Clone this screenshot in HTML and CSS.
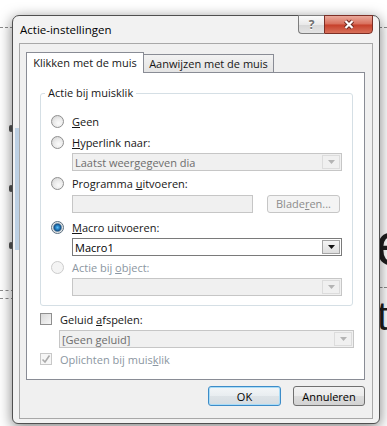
FILE: index.html
```html
<!DOCTYPE html>
<html lang="nl">
<head>
    <meta charset="UTF-8">
    <meta name="viewport" content="width=device-width, initial-scale=1.0">
    <title>Actie-instellingen</title>
    <link rel="stylesheet" href="styles.css">
</head>
<body>

<!-- slide behind the dialog -->
<div class="slide">
    <div class="dash dash-top"></div>
    <div class="dash dash-left-a"></div>
    <div class="dash dash-left-b"></div>
    <div class="dash dash-right"></div>
    <div class="handle handle-1"></div>
    <div class="handle handle-2"></div>
    <div class="handle handle-3"></div>
    <span class="glyph glyph-k">k</span>
    <span class="glyph glyph-e">e</span>
    <span class="glyph glyph-t">t</span>
</div>

<div class="dialog">
    <div class="titlebar">
        <span class="title">Actie-instellingen</span>
        <div class="caption-buttons">
            <div class="cap-btn cap-help">?</div>
            <div class="cap-btn cap-close">
                <svg width="14" height="11" viewBox="0 0 14 11">
                    <path d="M3.5 2 L10.5 9 M10.5 2 L3.5 9" stroke="#6b2a22" stroke-width="4.2" fill="none"/>
                    <path d="M3.5 2 L10.5 9 M10.5 2 L3.5 9" stroke="#ffffff" stroke-width="2.2" fill="none"/>
                </svg>
            </div>
        </div>
    </div>

    <div class="client">
        <div class="tabs">
            <div class="tab tab-active">Klikken met de muis</div>
            <div class="tab tab-inactive">Aanwijzen met de muis</div>
        </div>

        <div class="panel">
            <fieldset class="group">
                <legend>Actie bij muisklik</legend>

                <div class="opt">
                    <span class="radio"></span>
                    <span><u>G</u>een</span>
                </div>
                <div class="opt gap-5">
                    <span class="radio"></span>
                    <span><u>H</u>yperlink naar:</span>
                </div>
                <div class="combo indent gap-3">
                    <span>Laatst weergegeven dia</span>
                    <span class="combo-arrow">
                        <svg width="7" height="4" viewBox="0 0 7 4"><path d="M0 0 H7 L3.5 4 Z" fill="#b4b4b4"/></svg>
                    </span>
                </div>
                <div class="opt gap-4">
                    <span class="radio"></span>
                    <span>Programma <u>u</u>itvoeren:</span>
                </div>
                <div class="field-row indent gap-4">
                    <div class="field"></div>
                    <div class="btn-browse">Blade<u>r</u>en...</div>
                </div>
                <div class="opt gap-6">
                    <span class="radio radio-on"></span>
                    <span><u>M</u>acro uitvoeren:</span>
                </div>
                <div class="combo combo-enabled indent gap-3">
                    <span>Macro1</span>
                    <span class="combo-arrow">
                        <svg width="7" height="4" viewBox="0 0 7 4"><path d="M0 0 H7 L3.5 4 Z" fill="#111111"/></svg>
                    </span>
                </div>
                <div class="opt opt-disabled gap-3">
                    <span class="radio radio-disabled"></span>
                    <span>Actie bij <u>o</u>bject:</span>
                </div>
                <div class="combo indent gap-3">
                    <span></span>
                    <span class="combo-arrow">
                        <svg width="7" height="4" viewBox="0 0 7 4"><path d="M0 0 H7 L3.5 4 Z" fill="#b4b4b4"/></svg>
                    </span>
                </div>
            </fieldset>

            <div class="opt gap-5">
                <span class="check"></span>
                <span>Geluid <u>a</u>fspelen:</span>
            </div>
            <div class="combo combo-sound gap-3">
                <span>[Geen geluid]</span>
                <span class="combo-arrow">
                    <svg width="7" height="4" viewBox="0 0 7 4"><path d="M0 0 H7 L3.5 4 Z" fill="#b4b4b4"/></svg>
                </span>
            </div>
            <div class="opt opt-disabled gap-3">
                <span class="check check-disabled">
                    <svg width="10" height="10" viewBox="0 0 10 10"><path d="M1.5 5.5 L4 8 L8.5 1.5" stroke="#ababab" stroke-width="1.6" fill="none"/></svg>
                </span>
                <span>Oplichten bij muis<u>k</u>lik</span>
            </div>
        </div>

        <div class="actions">
            <button class="btn btn-ok">OK</button>
            <button class="btn btn-cancel">Annuleren</button>
        </div>
    </div>
</div>

</body>
</html>
```

FILE: styles.css
```css
body {
    margin: 0;
    width: 387px;
    height: 426px;
    overflow: hidden;
    position: relative;
    background-color: #ffffff;
    font-family: "Open Sans", "Noto Sans", sans-serif;
    font-size: 11px;
    color: #161616;
}
u {
    text-underline-offset: 1px;
}

/* slide behind the dialog */
.slide {
    position: absolute;
    inset: 0;
    overflow: hidden;
}
.dash {
    position: absolute;
    height: 0;
    border-top: 1px dashed #8c8c8c;
}
.dash-top {
    left: 0;
    right: 0;
    top: 27px;
}
.dash-left-a {
    left: 0;
    width: 14px;
    top: 290px;
}
.dash-left-b {
    left: 0;
    width: 14px;
    top: 298px;
}
.dash-right {
    right: 0;
    width: 12px;
    top: 287px;
}
.handle {
    position: absolute;
    left: 9px;
    width: 4px;
    height: 7px;
    border-radius: 2px;
    background-color: #555555;
}
.handle-1 { top: 125px; }
.handle-2 { top: 185px; }
.handle-3 { top: 242px; }
.glyph {
    position: absolute;
    font-family: "Liberation Sans", sans-serif;
    color: #1e1e1e;
    line-height: 1;
}
.glyph-e {
    left: 375px;
    top: 213px;
    font-size: 62px;
}
.glyph-t {
    left: 377px;
    top: 296px;
    font-size: 40px;
}
.glyph-k {
    left: -31px;
    top: 200px;
    font-size: 60px;
}

/* dialog window */
.dialog {
    position: absolute;
    left: 12px;
    top: 15px;
    width: 368px;
    height: 409px;
    box-sizing: border-box;
    border: 1px solid #505050;
    border-radius: 7px 7px 6px 6px;
    background: linear-gradient(#bdd0e3, #bdd0e3) no-repeat 2px 112px / 4px 122px, #f2f2f2;
    box-shadow: 0 3px 14px rgba(0, 0, 0, 0.5);
    display: flex;
    flex-direction: column;
}
.titlebar {
    height: 27px;
    flex: none;
    display: flex;
    align-items: center;
    padding-left: 7px;
}
.title {
    font-size: 11.5px;
    color: #000000;
}
.caption-buttons {
    margin-left: auto;
    margin-right: 6px;
    margin-top: -1px;
    align-self: flex-start;
    display: flex;
}
.cap-btn {
    height: 19px;
    box-sizing: border-box;
    border: 1px solid #7d7d7d;
    display: flex;
    align-items: center;
    justify-content: center;
}
.cap-help {
    width: 26px;
    border-right: none;
    border-radius: 0 0 0 4px;
    background: linear-gradient(#fbfbfb, #e9e9e9 50%, #d6d6d6 51%, #e4e4e4);
    color: #707070;
    font-weight: bold;
    font-size: 12px;
    text-shadow: 0 1px 0 #ffffff;
}
.cap-close {
    width: 49px;
    border-color: #7c2e25;
    border-radius: 0 0 4px 0;
    background: linear-gradient(#eaa99b, #d86e5b 48%, #c63f2a 52%, #d8705a);
}

.client {
    flex: none;
    margin: 0 6px 4px 6px;
    border: 1px solid #a8a8a8;
    background-color: #f0f0f0;
    padding: 8px 7px 12px 6px;
}

/* tabs */
.tabs {
    display: flex;
    align-items: flex-end;
    height: 20px;
}
.tab {
    box-sizing: border-box;
    text-align: center;
    border: 1px solid #898c95;
    border-bottom: none;
    white-space: nowrap;
}
.tab-active {
    width: 118px;
    height: 21px;
    line-height: 19px;
    margin-bottom: -1px;
    background-color: #ffffff;
    position: relative;
    z-index: 1;
}
.tab-inactive {
    width: 130px;
    height: 18px;
    line-height: 17px;
    border-left: none;
    background: linear-gradient(#f2f2f2, #e4e4e4);
}
.panel {
    height: 308px;
    box-sizing: border-box;
    border: 1px solid #898c95;
    background-color: #ffffff;
    padding: 0 11px 12px 13px;
}

/* group box */
.group {
    margin: 12px 0 0 0;
    border: 1px solid #d5dfe5;
    border-radius: 3px;
    padding: 12px 10px 9px 10px;
    min-inline-size: 0;
}
.group legend {
    padding: 0 3px;
    margin-left: -6px;
    line-height: 16px;
}

.gap-3 { margin-top: 3px; }
.gap-4 { margin-top: 4px; }
.gap-5 { margin-top: 5px; }
.gap-6 { margin-top: 6px; }
.indent { margin-left: 21px; }

.opt {
    display: flex;
    align-items: center;
    gap: 8px;
    height: 16px;
    white-space: nowrap;
}
.opt-disabled {
    color: #8b96a1;
}

.radio {
    width: 13px;
    height: 13px;
    box-sizing: border-box;
    border-radius: 50%;
    border: 1px solid #8f8f8f;
    background: radial-gradient(circle at 60% 65%, #fbfbfb 0, #ebebeb 45%, #cdcdcd 100%);
}
.radio-on {
    border-color: #5a6f80;
    background: radial-gradient(circle, #5cc0f5 0, #2a86ca 1.8px, #145186 3.4px, #8aa2b6 4.2px, #e2e2e2 4.8px, #f3f3f3 6px);
}
.radio-disabled {
    border-color: #cccccc;
    background: #f4f4f4;
}

.check {
    width: 12px;
    height: 12px;
    box-sizing: border-box;
    border: 1px solid #8f8f8f;
    background: linear-gradient(135deg, #d8d8d8, #f6f6f6);
    display: flex;
    align-items: center;
    justify-content: center;
}
.check-disabled {
    border-color: #c8c8c8;
    background: #f6f6f6;
}

/* combo boxes */
.combo {
    height: 18px;
    box-sizing: border-box;
    border: 1px solid #c6c6c6;
    background-color: #f0f0f0;
    color: #6d6d6d;
    display: flex;
    align-items: center;
    padding-left: 2px;
    white-space: nowrap;
}
.combo-enabled {
    border-color: #7a7a7a;
    background-color: #ffffff;
    color: #000000;
}
.combo-sound {
    width: 295px;
    margin-left: 19px;
}
.combo-arrow {
    margin-left: auto;
    margin-right: 1px;
    width: 18px;
    height: 14px;
    box-sizing: border-box;
    border: 1px solid #dcdcdc;
    display: flex;
    align-items: center;
    justify-content: center;
}
.combo-enabled .combo-arrow {
    border-color: #a4a4a4;
    background: linear-gradient(#f4f4f4, #dedede);
}

.field-row {
    display: flex;
    height: 18px;
}
.field {
    width: 181px;
    box-sizing: border-box;
    border: 1px solid #c6c6c6;
    background-color: #f0f0f0;
}
.btn-browse {
    width: 73px;
    margin-left: 14px;
    box-sizing: border-box;
    border: 1px solid #c6c6c6;
    border-radius: 3px;
    background-color: #f4f4f4;
    color: #8d8d8d;
    text-align: center;
    line-height: 16px;
}

/* dialog buttons */
.actions {
    display: flex;
    justify-content: flex-end;
    gap: 12px;
    margin-top: 6px;
}
.btn {
    height: 20px;
    padding: 0;
    box-sizing: border-box;
    font: inherit;
    color: #000000;
    border: 1px solid #707070;
    border-radius: 3px;
    background: linear-gradient(#f2f2f2, #ebebeb 50%, #dddddd 51%, #d2d2d2);
}
.btn-ok {
    width: 73px;
    border-color: #3d8cc8;
    box-shadow: inset 0 0 0 1px #a9dcf7;
    background: linear-gradient(#f3f6f8, #e8edf0 50%, #dde3e7 51%, #d5dce1);
}
.btn-cancel {
    width: 72px;
}
```
